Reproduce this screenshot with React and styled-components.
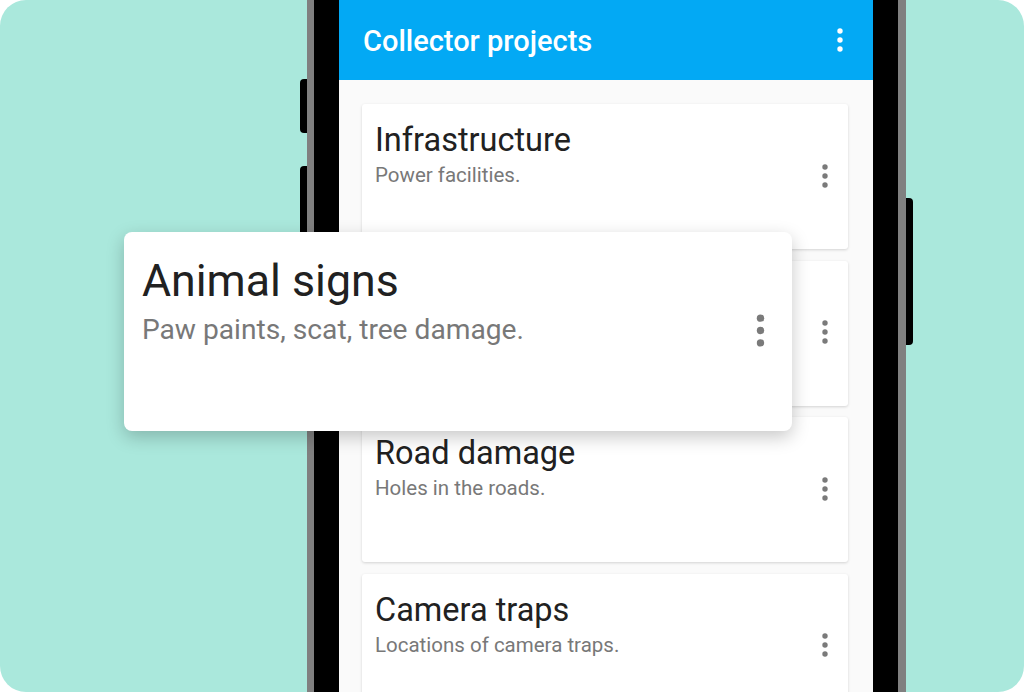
import React from "react";
import styled, { createGlobalStyle } from "styled-components";

const GlobalStyle = createGlobalStyle`
  html, body {
    margin: 0;
    padding: 0;
    background: #ffffff;
    font-family: Roboto, "Noto Sans", Arial, sans-serif;
  }
`;

const Stage = styled.div`
  position: relative;
  display: flex;
  width: 1024px;
  height: 692px;
  padding-left: 307px;
  box-sizing: border-box;
  background: #aae8dc;
  border-radius: 26px;
  overflow: hidden;
`;

const Phone = styled.div`
  position: relative;
  display: flex;
  width: 599px;
  height: 900px;
  flex-shrink: 0;
  margin-top: -80px;
  box-sizing: border-box;
  padding: 73px 25px;
  background: #000;
  border: 7px solid #808080;
  border-right-width: 8px;
  border-radius: 56px;
`;

const SideButton = styled.div`
  position: absolute;
  top: ${(p) => p.$top}px;
  height: ${(p) => p.$height}px;
  width: 7px;
  background: #000;
  ${(p) =>
    p.$right
      ? "right: -15px; border-radius: 0 4px 4px 0;"
      : "left: -14px; border-radius: 4px 0 0 4px;"}
`;

const Screen = styled.div`
  flex: 1;
  display: flex;
  flex-direction: column;
  background: #fafafa;
  overflow: hidden;
`;

const AppBar = styled.div`
  display: flex;
  align-items: center;
  justify-content: space-between;
  height: 80px;
  flex-shrink: 0;
  padding: 0 24px;
  box-sizing: border-box;
  background: #03a9f4;
`;

const AppTitle = styled.h1`
  margin: 0;
  padding-top: 2px;
  font-size: 29px;
  line-height: 34px;
  font-weight: 500;
  color: #ffffff;
`;

const BarMenu = styled.div`
  display: flex;
  align-items: center;
  justify-content: center;
  width: 24px;
  height: 24px;
  margin-right: -3px;
`;

const List = styled.div`
  display: flex;
  flex-direction: column;
  gap: 11.5px;
  padding: 24px 24px 0 23px;
`;

const Card = styled.div`
  display: flex;
  align-items: flex-start;
  box-sizing: border-box;
  width: ${(p) => 486 * p.$k}px;
  height: ${(p) => 145 * p.$k}px;
  flex-shrink: 0;
  padding: ${(p) => `${17 * p.$k}px ${13 * p.$k}px 0 ${13 * p.$k}px`};
  background: #ffffff;
  border-radius: ${(p) => (p.$k > 1 ? 8 : 3)}px;
  box-shadow: ${(p) =>
    p.$k > 1
      ? "0 6px 18px rgba(0, 0, 0, 0.22)"
      : "0 1px 3px rgba(0, 0, 0, 0.16)"};
`;

const Floating = styled.div`
  position: absolute;
  left: 124px;
  top: 232px;
  z-index: 2;
`;

const TextBlock = styled.div`
  flex: 1;
  min-width: 0;
`;

const Title = styled.div`
  font-size: ${(p) => 32.5 * p.$k}px;
  line-height: ${(p) => 38 * p.$k}px;
  color: #212121;
  font-weight: 400;
  white-space: nowrap;
`;

const Subtitle = styled.div`
  margin-top: ${(p) => 4 * p.$k}px;
  font-size: ${(p) => 20.5 * p.$k}px;
  line-height: ${(p) => 24 * p.$k}px;
  color: #787878;
  white-space: nowrap;
`;

const MenuButton = styled.div`
  display: flex;
  align-items: center;
  justify-content: center;
  flex-shrink: 0;
  width: ${(p) => 24 * p.$k}px;
  height: ${(p) => 24 * p.$k}px;
  margin-top: ${(p) => 42.7 * p.$k}px;
  margin-right: ${(p) => -2 * p.$k}px;
`;

const Kebab = ({ color = "#7a7a7a", size = 24 }) => (
  <svg width={size} height={size} viewBox="0 0 24 24">
    <circle cx="12" cy="3" r="2.7" fill={color} />
    <circle cx="12" cy="12" r="2.7" fill={color} />
    <circle cx="12" cy="21" r="2.7" fill={color} />
  </svg>
);

const projects = [
  { title: "Infrastructure", desc: "Power facilities." },
  { title: "Animal signs", desc: "Paw paints, scat, tree damage." },
  { title: "Road damage", desc: "Holes in the roads." },
  { title: "Camera traps", desc: "Locations of camera traps." },
];

const ProjectCard = ({ title, desc, k = 1 }) => (
  <Card $k={k}>
    <TextBlock>
      <Title $k={k}>{title}</Title>
      <Subtitle $k={k}>{desc}</Subtitle>
    </TextBlock>
    <MenuButton $k={k}>
      <Kebab size={Math.round(24 * k)} />
    </MenuButton>
  </Card>
);

const App = () => {
  return (
    <>
      <GlobalStyle />
      <Stage>
        <Phone>
          <SideButton $top={152} $height={54} />
          <SideButton $top={239} $height={100} />
          <SideButton $right $top={271} $height={147} />
          <Screen>
            <AppBar>
              <AppTitle>Collector projects</AppTitle>
              <BarMenu>
                <Kebab color="#ffffff" size={24} />
              </BarMenu>
            </AppBar>
            <List>
              {projects.map((p) => (
                <ProjectCard key={p.title} title={p.title} desc={p.desc} />
              ))}
            </List>
          </Screen>
        </Phone>
        <Floating>
          <ProjectCard k={1.375} title={projects[1].title} desc={projects[1].desc} />
        </Floating>
      </Stage>
    </>
  );
};

export default App;
